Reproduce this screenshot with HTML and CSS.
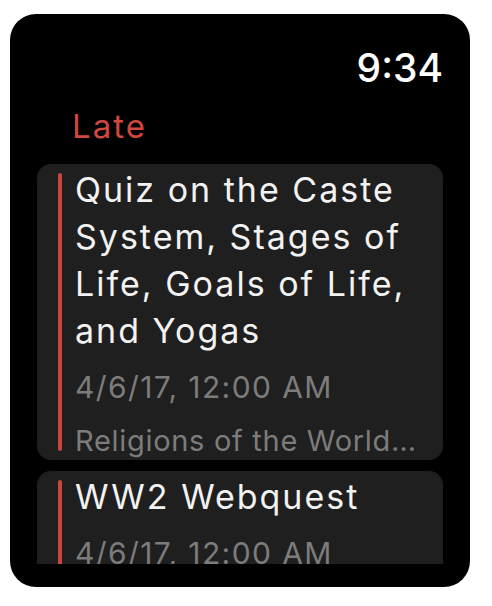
FILE: index.html
```html
<!DOCTYPE html>
<html>
<head>
<meta charset="utf-8">
<link rel="stylesheet" href="styles.css">
</head>
<body>
<div class="watch">
  <div class="time">9:34</div>
  <div class="section">Late</div>
  <div class="list">
    <div class="card">
      <div class="bar"></div>
      <div class="content">
        <div class="title">Quiz on the Caste System, Stages of Life, Goals of Life, and Yogas</div>
        <div class="date">4/6/17, 12:00 AM</div>
        <div class="course">Religions of the World…</div>
      </div>
    </div>
    <div class="card">
      <div class="bar"></div>
      <div class="content">
        <div class="title">WW2 Webquest</div>
        <div class="date">4/6/17, 12:00 AM</div>
      </div>
    </div>
  </div>
</div>
</body>
</html>
```
FILE: styles.css
```css
html, body {
  margin: 0;
  padding: 0;
  background: #fff;
}
body {
  font-family: Inter, Roboto, "Liberation Sans", sans-serif;
  width: 492px;
  height: 606px;
  overflow: hidden;
}
.watch {
  margin: 14px 0 0 10px;
  width: 460px;
  height: 573px;
  background: #000;
  border-radius: 26px;
  box-sizing: border-box;
  padding: 0 27px 23px 27px;
  display: flex;
  flex-direction: column;
}
.time {
  text-align: right;
  color: #fff;
  font-size: 39px;
  font-weight: 500;
  line-height: 40px;
  margin-top: 34px;
}
.section {
  color: #d0483f;
  font-size: 33px;
  letter-spacing: 2px;
  line-height: 40px;
  margin: 18px 0 0 35px;
}
.list {
  flex: 1;
  overflow: hidden;
  margin-top: 18px;
  display: flex;
  flex-direction: column;
  gap: 11px;
}
.card {
  flex-shrink: 0;
  background: #1f1f1f;
  border-radius: 14px;
  padding: 9px 10px 3px 21px;
  display: flex;
  gap: 13px;
}
.bar {
  width: 4px;
  flex-shrink: 0;
  background: #c9463d;
  border-radius: 2px;
  margin-bottom: 6px;
}
.content {
  flex: 1;
  min-width: 0;
}
.title {
  color: #f2f2f2;
  font-size: 34px;
  letter-spacing: 2px;
  line-height: 47px;
  margin-top: -7px;
}
.date {
  color: #7c7c7c;
  font-size: 30px;
  letter-spacing: 1.4px;
  line-height: 40px;
  margin-top: 13px;
}
.course {
  color: #7c7c7c;
  font-size: 29px;
  letter-spacing: 0.7px;
  line-height: 32px;
  margin-top: 18px;
  white-space: nowrap;
}
```
